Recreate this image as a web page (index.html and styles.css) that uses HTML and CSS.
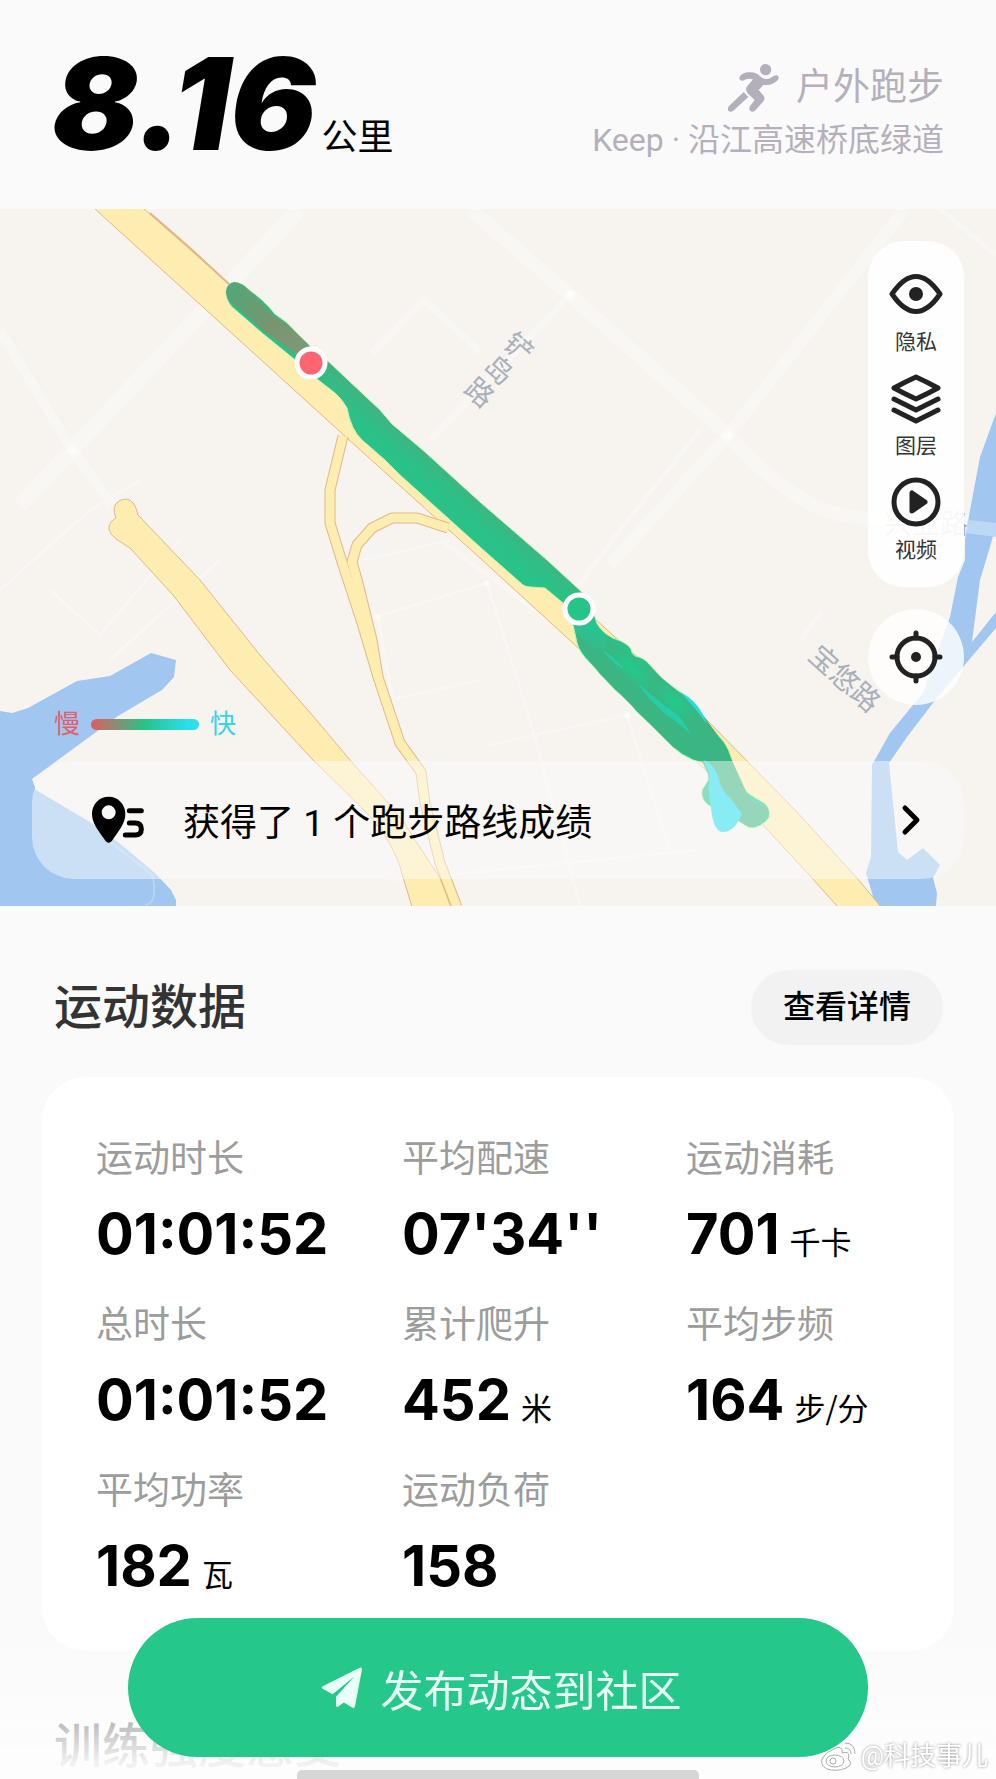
FILE: index.html
```html
<!DOCTYPE html>
<html lang="zh-CN">

<head>
    <meta charset="UTF-8">
    <meta name="viewport" content="width=device-width, initial-scale=1.0">
    <title>户外跑步</title>
    <link rel="stylesheet" href="styles.css">
</head>

<body>
    <header class="header">
        <h1 class="distance">8.16<span class="distance-unit">公里</span></h1>
        <div class="workout">
            <div class="workout-type">
                <svg class="runner" viewBox="430 35 162 150" aria-hidden="true">
                    <circle cx="549" cy="55" r="17" fill="currentColor" />
                    <path d="M470 79C474 66 492 60 515 64Q526 66 535 77Q547 87 562 81L573 74Q581 69 587 75Q590 82 583 88Q566 104 543 100L528 116L543 133Q549 142 541 151L519 176Q512 184 503 179Q497 173 502 165L516 146L496 127Q485 115 494 104L511 84Q499 80 490 84Q481 91 473 87Q469 84 470 79Z" fill="currentColor" />
                    <path d="M483 122L497 137L452 178Q443 184 437 178Q433 171 440 163Z" fill="currentColor" />
                </svg>
                <span>户外跑步</span>
            </div>
            <p class="workout-place">Keep · 沿江高速桥底绿道</p>
        </div>
    </header>

    <section class="map">
        <svg class="map-canvas" viewBox="0 209 996 697" role="img" aria-label="跑步路线">
            <defs>
                <linearGradient id="routeMain" gradientUnits="userSpaceOnUse" x1="400" y1="490" x2="430" y2="455">
                    <stop offset="0" stop-color="#26c489" />
                    <stop offset="0.6" stop-color="#2cc087" />
                    <stop offset="1" stop-color="#3eb581" />
                </linearGradient>
                <linearGradient id="routeSlow" gradientUnits="userSpaceOnUse" x1="230" y1="285" x2="305" y2="350">
                    <stop offset="0" stop-color="#52a778" />
                    <stop offset="0.6" stop-color="#7a9470" />
                    <stop offset="1" stop-color="#7c9a76" />
                </linearGradient>
                <radialGradient id="glow">
                    <stop offset="0" stop-color="#20cb8c" />
                    <stop offset="1" stop-color="#20cb8c" stop-opacity="0" />
                </radialGradient>
            </defs>
            <rect y="209" width="996" height="697" fill="#f7f4f0" />

            <!-- side streets -->
            <g class="streets">
                <path d="M300 209L72 450L20 505" stroke-width="16" />
                <path d="M0 330L72 450L112 505" stroke-width="10" />
                <path d="M470 209L570 295L728 435Q800 515 860 518L996 524" stroke-width="14" />
                <path d="M905 209L728 435L610 565" stroke-width="12" />
                <path d="M570 295L430 440M372 353L424 300L480 352" stroke-width="7" />
                <path d="M940 209L996 255M700 430L620 530L560 610M800 640L822 612M440 540L720 745L860 880" stroke-width="5" />
                <path d="M0 590L90 510L140 480M50 590L100 635L180 540M110 660L220 560M365 620L487 583L530 720L580 905M378 617L400 740M390 700L480 680M490 745L627 715L670 850M365 560L450 540M390 880L700 850" stroke-width="3" />
            </g>
            <g fill="#fff" fill-opacity="0.6">
                <circle cx="72" cy="450" r="5" />
                <circle cx="570" cy="295" r="5" />
                <circle cx="728" cy="435" r="5" />
                <circle cx="487" cy="583" r="3" />
                <circle cx="378" cy="617" r="3" />
                <circle cx="627" cy="715" r="3" />
            </g>

            <!-- water -->
            <g fill="#a1c7f0">
                <path d="M0 711L12 713L28 708L77 681L110 676L151 653L176 660L174 677L162 690L118 716L32 779L36 790L90 822L118 842L155 873L171 890L176 900V906H0Z" />
                <path d="M996 413L980 457L970 510L965 540V560L958 577L950 617L923 693L913 705L890 733L872 765L871 857L866 873L872 893L875 906H936L937 893L933 878L940 865L923 848L907 860L898 852L889 763L907 737L933 703L963 667L996 628V612L972 642L980 580L990 547L996 525Z" />
            </g>
            <path d="M968 520L996 523V537L966 533Z" fill="#bdd8f4" />
            <path d="M110 842L150 873Q154 877 154 885V895Q153 904 145 905" fill="none" stroke="#b5d3f2" stroke-width="2" />

            <!-- motorways -->
            <g fill="#fdedb1" stroke="#e0b887" stroke-width="1">
                <path d="M94 208L347 438L480 558L575 645L763 825L812 878L838 907H881L857 878L797 812L747 761L707 720L615 637L480 515L228 283L143 208Z" />
                <path d="M150 213L190 248L230 285" fill="none" stroke-width="2" />
                <path d="M138 515L200 580L260 655L313 716L350 760L390 805Q405 822 417 843L440 878L451 907H412L403 877Q400 863 393 850Q383 830 367 813L313 760L230 670L173 595L130 548L116 539Q105 530 111 522Q114 519 116 518Q111 506 119 501Q128 496 134 504Q137 509 138 515Z" />
            </g>
            <g fill="none" stroke-linejoin="round">
                <path class="ramp-edge" d="M343 436L330 490V523L342 562L362 623L373 660L378 677L400 743L421 772L425 803L440 863L457 907" />
                <path class="ramp-edge" d="M448 528L417 518H392L372 528L357 545L352 562L358 583L372 640L378 677" />
                <path class="ramp" d="M343 436L330 490V523L342 562L362 623L373 660L378 677L400 743L421 772L425 803L440 863L457 907" />
                <path class="ramp" d="M448 528L417 518H392L372 528L357 545L352 562L358 583L372 640L378 677" />
            </g>

            <!-- route -->
            <path d="M234 282Q243 283 248 289Q263 299 275 314Q288 322 297 333L309 345L330 363L380 410L392 424L425 452L480 502L547 560L585 595L595 617Q597 630 613 638Q628 643 631 649Q632 655 635 656Q645 658 650 665L663 679Q672 688 680 692Q692 699 700 711L710 731Q726 737 732 760Q735 777 747 792Q755 798 763 802Q772 808 769 818Q760 829 750 828Q744 826 738 820Q734 832 722 832Q713 830 711 807Q700 801 702 790L708 780V773L703 763L693 760Q681 755 673 747L653 727L635 710Q632 702 627 697Q619 694 615 690L603 677L590 663Q579 652 577 643L573 625L563 603L545 588L530 587Q526 587 523 585L480 547L450 520L400 475L385 460L362 440Q351 430 347 408Q342 399 335 393L317 379L294 359L262 333L232 307Q225 299 226 291Q228 283 234 282Z" fill="url(#routeMain)" stroke="#c9f2b4" stroke-width="1" />
            <path d="M577 625L610 642Q650 665 700 711L725 745L750 800L768 810Q768 825 750 827L727 815L703 763L673 747L640 714L600 674L578 643Z" fill="#3bb682" />
            <path d="M234 282Q226 284 226 293Q228 303 238 308L264 331L299 356L309 345L291 328L270 313L248 289Q242 283 234 282Z" fill="url(#routeSlow)" />
            <ellipse cx="632" cy="668" rx="34" ry="13" transform="rotate(42 632 668)" fill="url(#glow)" />
            <ellipse cx="675" cy="702" rx="28" ry="13" transform="rotate(45 675 702)" fill="url(#glow)" />
            <ellipse cx="590" cy="632" rx="22" ry="10" transform="rotate(45 590 632)" fill="#22c9a0" opacity="0.4" />
            <path d="M601 649Q613 656 625 670Q613 663 601 649ZM636 682L665 706Q684 717 691 735Q676 720 664 713Q648 698 636 682Z" fill="#20d4b0" opacity="0.8" />
            <path d="M680 692Q699 701 707 724Q694 706 680 692Z" fill="#2cdde0" />
            <path d="M704 760Q714 763 719 780Q722 791 731 799L742 814Q734 832 722 832Q713 830 711 806Q707 790 710 775Q705 765 704 760Z" fill="#20deee" />

            <g class="pin">
                <circle cx="311" cy="363" r="14" fill="#fe6570" />
                <circle cx="579" cy="609" r="14" fill="#26c489" />
            </g>

            <g class="street-name">
                <g transform="translate(499 370) rotate(41)">
                    <text y="-20">铲</text>
                    <text y="10">岛</text>
                    <text y="40">路</text>
                </g>
                <text transform="translate(838 686) rotate(42)">宝悠路</text>
                <text x="926" y="534">兴业路</text>
            </g>
        </svg>

        <div class="map-tools">
            <div class="tool-list">
                <button class="tool" type="button">
                    <svg viewBox="0 0 54 54" aria-hidden="true">
                        <path d="M3 27Q27-8 51 27Q27 62 3 27Z" />
                        <circle cx="27" cy="27" r="7" class="solid" />
                    </svg>
                    隐私
                </button>
                <button class="tool" type="button">
                    <svg viewBox="0 0 54 54" aria-hidden="true">
                        <path d="M5 17Q16 11 27 6Q38 11 49 17Q38 23 27 28Q16 23 5 17Z" />
                        <path d="M5 28L27 39L49 28M5 39L27 50L49 39" />
                    </svg>
                    图层
                </button>
                <button class="tool" type="button">
                    <svg viewBox="0 0 54 54" aria-hidden="true">
                        <circle cx="27" cy="27" r="22" />
                        <path d="M23 18V36L36 27Z" class="solid-round" />
                    </svg>
                    视频
                </button>
            </div>
            <button class="locate" type="button" aria-label="定位">
                <svg viewBox="0 0 54 54" aria-hidden="true">
                    <circle cx="27" cy="27" r="19" />
                    <circle cx="27" cy="27" r="5" class="solid" />
                    <path d="M27 3V8M27 46V51M3 27H8M46 27H51" />
                </svg>
            </button>
        </div>

        <div class="map-bottom">
            <div class="speed">
                <span class="slow">慢</span>
                <span class="speed-bar"></span>
                <span class="fast">快</span>
            </div>
            <a class="achievement" href="#">
                <svg class="route-icon" viewBox="270 945 168 150" aria-hidden="true">
                    <path d="M326 950C298 950 276 972 276 1002C276 1028 293 1050 312 1076Q326 1100 340 1076C359 1050 376 1028 376 1002C376 972 354 950 326 950ZM326 976A21 21 0 1 1 326 1018A21 21 0 1 1 326 976Z" fill-rule="evenodd" />
                    <path d="M388 992H424M388 1029H406Q424 1029 424 1047Q424 1065 406 1065H376" fill="none" stroke="#000" stroke-width="15" stroke-linecap="round" />
                </svg>
                <span class="achievement-text">获得了 1 个跑步路线成绩</span>
                <svg class="chevron" viewBox="0 0 20 32" aria-hidden="true">
                    <path d="M4 4L16 16L4 28" />
                </svg>
            </a>
        </div>
    </section>

    <main class="data">
        <div class="data-head">
            <h2>运动数据</h2>
            <button class="detail" type="button">查看详情</button>
        </div>
        <dl class="card">
            <div class="stat">
                <dt>运动时长</dt>
                <dd>01:01:52</dd>
            </div>
            <div class="stat">
                <dt>平均配速</dt>
                <dd>07'34''</dd>
            </div>
            <div class="stat">
                <dt>运动消耗</dt>
                <dd>701<span class="unit">千卡</span></dd>
            </div>
            <div class="stat">
                <dt>总时长</dt>
                <dd>01:01:52</dd>
            </div>
            <div class="stat">
                <dt>累计爬升</dt>
                <dd>452<span class="unit">米</span></dd>
            </div>
            <div class="stat">
                <dt>平均步频</dt>
                <dd>164<span class="unit">步/分</span></dd>
            </div>
            <div class="stat">
                <dt>平均功率</dt>
                <dd>182<span class="unit">瓦</span></dd>
            </div>
            <div class="stat">
                <dt>运动负荷</dt>
                <dd>158</dd>
            </div>
        </dl>
        <h2 class="next-title">训练强度感受</h2>
    </main>

    <footer class="publish-bar">
        <button class="publish" type="button">
            <svg class="plane" viewBox="66 78 126 128" aria-hidden="true">
                <path d="M70 139Q66 143 71 146L101 162L166 109L111 170V196Q112 203 118 199L135 187L159 202Q166 206 168 198L189 87Q189 80 182 83Z" fill="currentColor" />
            </svg>
            发布动态到社区
        </button>
        <div class="home-indicator"></div>
        <div class="watermark">
            <svg viewBox="0 0 36 30" aria-hidden="true">
                <path d="M14 8Q20 4 22 9V12Q29 10 29 15L28 18Q34 23 26 27Q17 31 7 28Q-2 23 4 15Q8 10 14 8Z" />
                <ellipse cx="15" cy="20" rx="9" ry="6" />
                <circle cx="13" cy="20" r="3" />
                <path d="M25 7Q31 7 31 13M25 2Q35 2 35 13" fill="none" />
            </svg>
            @科技事儿
        </div>
    </footer>
</body>

</html>
```
FILE: styles.css
```css
:root {
    --green: #26c78b;
    --muted: #b4b0bb;
    --cjk: "Noto Sans CJK SC", sans-serif;
    --digits: Inter, sans-serif;
}

* {
    box-sizing: border-box;
}

body {
    margin: 0;
    background: #fafafa;
    color: #000;
    font-family: Roboto, var(--cjk);
}

h1,
h2,
p,
dl,
dd {
    margin: 0;
}

button {
    border: 0;
    padding: 0;
    color: inherit;
    font-family: inherit;
}

/* header */
.header {
    display: flex;
    justify-content: space-between;
    padding: 28px 52px 29px;
}

.distance {
    font: italic 900 128px/152px var(--digits);
}

.distance-unit {
    margin-left: 5px;
    font: normal 400 36px/40px var(--cjk);
}

.workout {
    padding-top: 34px;
    color: var(--muted);
    text-align: right;
}

.workout-type {
    display: flex;
    justify-content: flex-end;
    align-items: center;
    gap: 16px;
    font-size: 37px;
    line-height: 52px;
}

.runner {
    width: 54px;
    height: 50px;
}

.workout-place {
    font-size: 32px;
    line-height: 52px;
}

/* map */
.map {
    position: relative;
}

.map-canvas {
    display: block;
    width: 100%;
}

.streets {
    fill: none;
    stroke: #fbf9f7;
    stroke-opacity: 0.5;
}

.ramp-edge {
    stroke: #e0b887;
    stroke-width: 11px;
}

.ramp {
    stroke: #fdedb1;
    stroke-width: 9px;
}

.pin {
    stroke: #fff;
    stroke-width: 5px;
}

.street-name {
    fill: #a9b0bb;
    font-family: var(--cjk);
    font-size: 28px;
    text-anchor: middle;
}

.map-tools {
    position: absolute;
    top: 32px;
    right: 32px;
    width: 96px;
}

.tool-list {
    display: flex;
    flex-direction: column;
    gap: 16px;
    padding: 26px 0 24px;
    border-radius: 36px;
    background: rgba(255, 255, 255, 0.9);
}

.tool {
    display: flex;
    flex-direction: column;
    align-items: center;
    gap: 8px;
    background: none;
    color: #333;
    font-size: 21px;
    line-height: 26px;
}

.map-tools svg {
    width: 54px;
    height: 54px;
    fill: none;
    stroke: #222;
    stroke-width: 5px;
    stroke-linecap: round;
    stroke-linejoin: round;
}

.map-tools .solid {
    fill: #222;
    stroke: none;
}

.map-tools .solid-round {
    fill: #222;
}

.locate {
    display: flex;
    justify-content: center;
    align-items: center;
    width: 96px;
    height: 96px;
    margin-top: 22px;
    border-radius: 50%;
    background: rgba(255, 255, 255, 0.8);
}

.map-bottom {
    position: absolute;
    right: 32px;
    bottom: 27px;
    left: 32px;
}

.speed {
    display: flex;
    align-items: center;
    gap: 11px;
    padding: 0 22px 19px;
    font-size: 26px;
    line-height: 36px;
}

.slow {
    color: #e0606a;
}

.fast {
    color: #35d5e6;
}

.speed-bar {
    width: 108px;
    height: 11px;
    border-radius: 6px;
    background: linear-gradient(to right, #e25c60, #26c48a 50%, #2adfee 90%);
}

.achievement {
    display: flex;
    align-items: center;
    height: 118px;
    padding: 0 43px 0 58px;
    border-radius: 42px;
    background: rgba(250, 250, 250, 0.48);
    color: #000;
    font-size: 37px;
    text-decoration: none;
}

.route-icon {
    width: 56px;
    height: 50px;
}

.achievement-text {
    flex: 1;
    margin-left: 37px;
}

.chevron {
    width: 20px;
    height: 32px;
    fill: none;
    stroke: #000;
    stroke-width: 5px;
    stroke-linecap: round;
    stroke-linejoin: round;
}

/* workout data */
.data {
    padding: 64px 42px 0;
}

.data-head {
    display: flex;
    justify-content: space-between;
    align-items: center;
    padding: 0 11px 0 12px;
}

h2 {
    color: #333;
    font-size: 48px;
    font-weight: 500;
    line-height: 75px;
}

.detail {
    padding: 0 32px;
    border-radius: 38px;
    background: #f2f2f2;
    font-size: 32px;
    font-weight: 500;
    line-height: 75px;
}

.card {
    display: grid;
    grid-template-columns: 306fr 284fr 268fr;
    row-gap: 33px;
    margin-top: 32px;
    padding: 56px 0 53px 54px;
    border-radius: 44px;
    background: #fff;
}

.stat dt {
    color: #9c9c9c;
    font-size: 37px;
    line-height: 54px;
}

.stat dd {
    padding-top: 15px;
    font: 700 56px/64px var(--digits);
    white-space: nowrap;
}

.unit {
    margin-left: 10px;
    font: 400 31px/40px var(--cjk);
}

.next-title {
    padding: 64px 12px 0;
    line-height: 64px;
}

/* floating publish bar */
.publish-bar {
    position: fixed;
    right: 0;
    bottom: 0;
    left: 0;
    display: flex;
    flex-direction: column;
    align-items: center;
    background: linear-gradient(to bottom, rgba(253, 253, 253, 0), rgba(253, 253, 253, 0.94) 90%);
}

.publish {
    display: flex;
    justify-content: center;
    align-items: center;
    gap: 18px;
    width: 74.2%;
    height: 139px;
    padding-left: 6px;
    border-radius: 70px;
    background: var(--green);
    color: #eafff5;
    font-size: 43px;
}

.plane {
    width: 42px;
    height: 43px;
}

.home-indicator {
    width: 402px;
    height: 9px;
    margin-top: 13px;
    border-radius: 5px 5px 0 0;
    background: #d6d6d6;
}

.watermark {
    position: absolute;
    right: 8px;
    bottom: 4px;
    display: flex;
    align-items: center;
    gap: 5px;
    color: #fff;
    font-size: 26px;
    line-height: 38px;
    text-shadow: 0 0 3px #888;
}

.watermark svg {
    width: 36px;
    height: 30px;
    fill: #fff;
    stroke: #aaa;
    stroke-width: 1px;
}
```
